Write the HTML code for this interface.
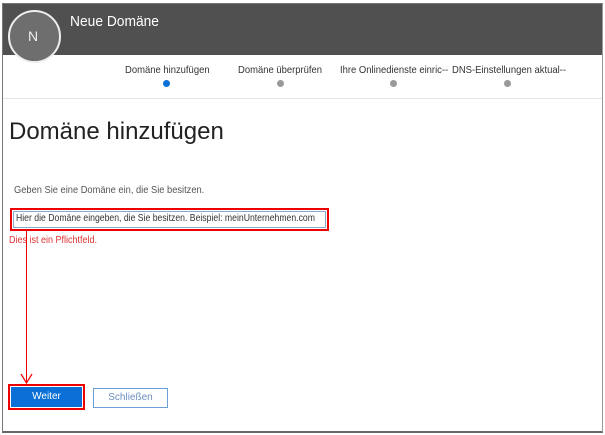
<!DOCTYPE html>
<html><head><meta charset="utf-8"><style>
body{margin:0;width:605px;height:435px;background:#fff;font-family:"Liberation Sans",sans-serif;position:relative;overflow:hidden}
.a{position:absolute;white-space:nowrap}
.s{transform-origin:left top}
</style></head><body>
<div class="a" style="left:2px;top:3px;width:599px;height:427px;border:1px solid #777;border-right-color:#999;border-bottom:2px solid #666"></div>
<div class="a" style="left:3px;top:4px;width:599px;height:51px;background:#505050"></div>
<div class="a" style="left:8px;top:10px;width:49px;height:49px;border-radius:50%;background:#6e6e6e;border:2px solid #eee"></div>
<div class="a" style="left:28px;top:28px;color:#eee;font-size:14px">N</div>
<div class="a s" style="left:70px;top:13px;color:#fff;font-size:15px;transform:scaleX(0.92)">Neue Domäne</div>
<div class="a s" style="left:125px;top:64px;color:#333;font-size:10.5px;transform:scaleX(0.9)">Domäne hinzufügen</div>
<div class="a s" style="left:238px;top:64px;color:#333;font-size:10.5px;transform:scaleX(0.9)">Domäne überprüfen</div>
<div class="a s" style="left:340px;top:64px;color:#333;font-size:10.5px;transform:scaleX(0.9)">Ihre Onlinedienste einric--</div>
<div class="a s" style="left:452px;top:64px;color:#333;font-size:10.5px;transform:scaleX(0.9)">DNS-Einstellungen aktual--</div>
<div class="a" style="left:163px;top:80px;width:7px;height:7px;border-radius:50%;background:#0a6fd6"></div>
<div class="a" style="left:277px;top:80px;width:7px;height:7px;border-radius:50%;background:#999"></div>
<div class="a" style="left:390px;top:80px;width:7px;height:7px;border-radius:50%;background:#999"></div>
<div class="a" style="left:504px;top:80px;width:7px;height:7px;border-radius:50%;background:#999"></div>
<div class="a" style="left:3px;top:98px;width:599px;height:1px;background:#e6e6e6"></div>
<div class="a" style="left:9px;top:118px;color:#222;font-size:24px">Domäne hinzufügen</div>
<div class="a s" style="left:14px;top:185px;color:#555;font-size:10px;transform:scaleX(0.93)">Geben Sie eine Domäne ein, die Sie besitzen.</div>
<div class="a" style="left:10px;top:208px;width:315px;height:19px;border:2px solid #e00;"></div>
<div class="a" style="left:13px;top:211px;width:311px;height:15px;border:1px solid #8ac"></div>
<div class="a s" style="left:16px;top:213px;color:#333;font-size:10px;transform:scaleX(0.866)">Hier die Domäne eingeben, die Sie besitzen. Beispiel: meinUnternehmen.com</div>
<div class="a s" style="left:9px;top:235px;color:#d33;font-size:10px;transform:scaleX(0.9)">Dies ist ein Pflichtfeld.</div>
<div class="a" style="left:26px;top:230px;width:1px;height:152px;background:#e00"></div>
<svg class="a" style="left:20px;top:373px" width="13" height="12"><path d="M1 1 L6.5 10 L12 1" fill="none" stroke="#e00" stroke-width="1.2"/></svg>
<div class="a" style="left:8px;top:384px;width:73px;height:22px;border:2px solid #e00;"></div>
<div class="a" style="left:11px;top:387px;width:71px;height:20px;background:#0a6fd6;color:#fff;font-size:10px;text-align:center;line-height:20px">Weiter</div>
<div class="a" style="left:93px;top:388px;width:73px;height:18px;border:1px solid #6b9fd6;color:#6b8fc0;font-size:10px;text-align:center;line-height:18px">Schließen</div>
</body></html>
